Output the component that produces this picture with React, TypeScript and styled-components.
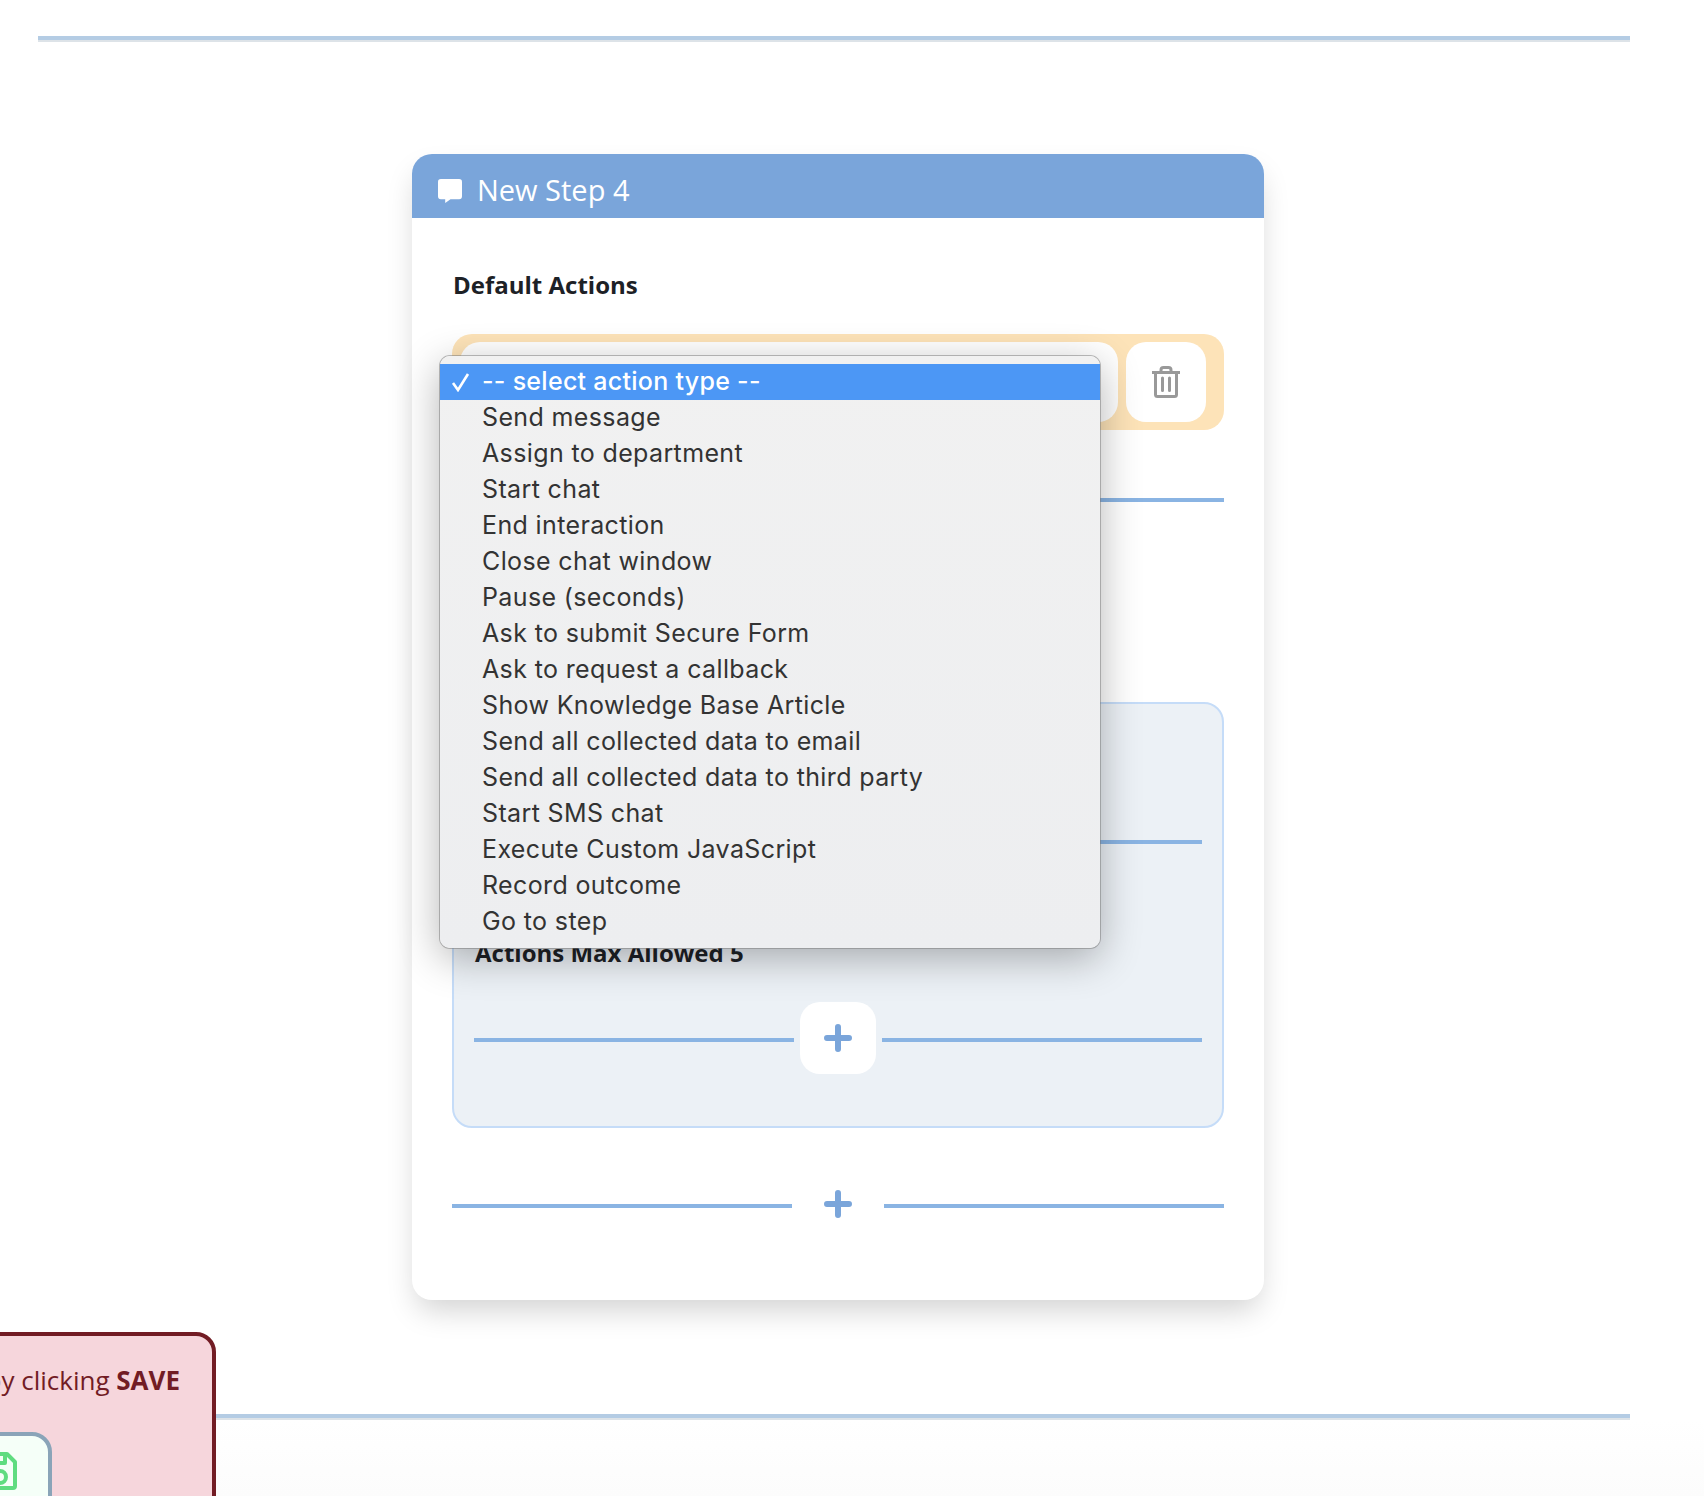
import React from 'react';
import styled, { createGlobalStyle } from 'styled-components';

const ACTION_TYPES = [
  'Send message',
  'Assign to department',
  'Start chat',
  'End interaction',
  'Close chat window',
  'Pause (seconds)',
  'Ask to submit Secure Form',
  'Ask to request a callback',
  'Show Knowledge Base Article',
  'Send all collected data to email',
  'Send all collected data to third party',
  'Start SMS chat',
  'Execute Custom JavaScript',
  'Record outcome',
  'Go to step',
];

const GlobalStyle = createGlobalStyle`
  html, body {
    margin: 0;
    padding: 0;
    background: #fff;
  }
  body {
    font-family: 'Open Sans', sans-serif;
    color: #1d2126;
    overflow: hidden;
  }
`;

const Page = styled.div`
  position: relative;
  height: 1496px;
  overflow: hidden;
  padding-top: 36px;
  box-sizing: border-box;
  background: linear-gradient(#fff 1420px, #fcfcfc 1496px);
`;

const PageRule = styled.div`
  height: 4px;
  margin: 0 74px 0 38px;
  background: #b4cce4;
  box-shadow: 0 2px 0 #dde3e8;
`;

const Card = styled.section`
  position: relative;
  width: 852px;
  margin: 114px 0 114px 412px;
  background: #fff;
  border-radius: 20px;
  box-shadow: 0 15px 30px -5px rgba(0, 0, 0, 0.18);
`;

const CardHeader = styled.header`
  display: flex;
  align-items: center;
  gap: 15px;
  height: 58px;
  padding: 6px 0 0 26px;
  background: #7aa5da;
  border-radius: 20px 20px 0 0;
  color: #fff;
  font-size: 29px;
  font-weight: 500;
`;

const BubbleIcon = styled.svg`
  margin-top: 3px;
`;

const CardBody = styled.div`
  padding: 51px 40px 82px;
`;

const SectionLabel = styled.h3<{ $top?: number; $bottom?: number }>`
  margin: ${(p) => p.$top ?? 0}px 0 ${(p) => p.$bottom ?? 0}px;
  padding-left: 1px;
  font-size: 24px;
  line-height: 32px;
  font-weight: 700;
  color: #1d2126;
`;

const ActionRow = styled.div`
  display: flex;
  gap: 8px;
  margin-top: 33px;
  padding: 8px 18px 8px 8px;
  background: #fde3b8;
  border-radius: 20px;
`;

const ActionSelect = styled.div`
  flex: 1;
  height: 80px;
  background: #fff;
  border-radius: 20px;
`;

const IconButton = styled.button<{ $width: number; $height: number }>`
  display: flex;
  align-items: center;
  justify-content: center;
  flex: none;
  width: ${(p) => p.$width}px;
  height: ${(p) => p.$height}px;
  padding: 0;
  border: 0;
  background: #fff;
  border-radius: 20px;
`;

const Rule = styled.div<{ $top?: number }>`
  flex: 1;
  height: 4px;
  margin-top: ${(p) => p.$top ?? 0}px;
  background: #8ab4e3;
`;

const AddRow = styled.div<{ $top: number; $gap: number }>`
  display: flex;
  align-items: center;
  gap: ${(p) => p.$gap}px;
  margin-top: ${(p) => p.$top}px;
`;

const SubPanel = styled.div`
  margin-top: 200px;
  padding: 136px 20px 52px;
  background: #ecf1f6;
  border: 2px solid #c5dcf8;
  border-radius: 20px;
`;

const BareAdd = styled.div`
  display: flex;
  flex: none;
  width: 28px;
  height: 28px;
  padding: 0 16px;
`;

const Dropdown = styled.ul`
  position: absolute;
  left: 28px;
  top: 202px;
  z-index: 2;
  width: 660px;
  margin: 0;
  padding: 8px 0;
  box-sizing: border-box;
  list-style: none;
  background: linear-gradient(#f1f1f1, #edeef0);
  border-radius: 10px;
  box-shadow: 0 0 0 1px rgba(120, 120, 120, 0.5), 0 10px 40px rgba(0, 0, 0, 0.3);
  font-family: Inter, sans-serif;
  font-size: 25px;
  letter-spacing: 0.37px;
  color: #333;
`;

const Option = styled.li<{ $selected?: boolean }>`
  display: flex;
  align-items: center;
  height: 36px;
  padding: 0 0 2px 42px;
  box-sizing: border-box;
  position: relative;
  white-space: nowrap;
  background: ${(p) => (p.$selected ? '#4c97f5' : 'transparent')};
  color: ${(p) => (p.$selected ? '#fff' : '#333')};
  font-weight: ${(p) => (p.$selected ? 500 : 400)};
  letter-spacing: ${(p) => (p.$selected ? '0.28px' : 'inherit')};
`;

const Check = styled.svg`
  position: absolute;
  left: 11px;
  top: 8px;
`;

const Notice = styled.aside`
  position: absolute;
  left: -300px;
  top: 1332px;
  display: flex;
  flex-direction: column;
  width: 516px;
  height: 220px;
  padding: 26px 32px 0 0;
  box-sizing: border-box;
  background: #f6d6dc;
  border: 4px solid #721c24;
  border-radius: 20px;
  color: #721c24;
  font-size: 26px;
  line-height: 36px;
  text-align: right;
`;

const SaveButton = styled.button`
  display: flex;
  align-items: flex-start;
  justify-content: flex-end;
  width: 348px;
  height: 110px;
  margin-top: 34px;
  padding: 16px 31px 0 0;
  box-sizing: border-box;
  background: #f5fff8;
  border: 4px solid #8aa4b8;
  border-radius: 20px;
`;

const PlusIcon = () => (
  <svg width="28" height="28" viewBox="0 0 28 28" fill="none" stroke="#7aa5da" strokeWidth="6" strokeLinecap="round">
    <path d="M14 3v22M3 14h22" />
  </svg>
);

const App = () => (
  <Page>
    <GlobalStyle />
    <PageRule />
    <Card>
      <CardHeader>
        <BubbleIcon width="24" height="24" viewBox="0 0 25 25" fill="#fff">
          <path d="M3 0h19a3 3 0 0 1 3 3v15a3 3 0 0 1-3 3h-9l-5.5 4v-4H3a3 3 0 0 1-3-3V3a3 3 0 0 1 3-3z" />
        </BubbleIcon>
        New Step 4
      </CardHeader>
      <CardBody>
        <SectionLabel>Default Actions</SectionLabel>
        <ActionRow>
          <ActionSelect />
          <IconButton $width={80} $height={80} aria-label="Delete">
            <svg width="28" height="32" viewBox="0 0 28 32" fill="none" stroke="#999" strokeWidth="3" strokeLinejoin="round">
              <path d="M0 6.5h28" />
              <path d="M9 6V4a2.5 2.5 0 0 1 2.5-2.5h5A2.5 2.5 0 0 1 19 4v2" />
              <path d="M3.5 6.5v22a2 2 0 0 0 2 2h17a2 2 0 0 0 2-2v-22" />
              <path d="M10.5 12v12.5M17.5 12v12.5" strokeLinecap="round" />
            </svg>
          </IconButton>
        </ActionRow>
        <Rule $top={68} />
        <SubPanel>
          <Rule />
          <SectionLabel $top={93} $bottom={33}>
            Actions Max Allowed 5
          </SectionLabel>
          <AddRow $top={0} $gap={6}>
            <Rule $top={4} />
            <IconButton $width={76} $height={72} aria-label="Add action">
              <PlusIcon />
            </IconButton>
            <Rule $top={4} />
          </AddRow>
        </SubPanel>
        <AddRow $top={62} $gap={16}>
          <Rule $top={4} />
          <BareAdd>
            <PlusIcon />
          </BareAdd>
          <Rule $top={4} />
        </AddRow>
      </CardBody>
      <Dropdown>
        <Option $selected>
          <Check width="20" height="20" viewBox="0 0 20 20" fill="none" stroke="#fff" strokeWidth="2.6">
            <path d="M2 11l5 7L17 2" />
          </Check>
          -- select action type --
        </Option>
        {ACTION_TYPES.map((label) => (
          <Option key={label}>{label}</Option>
        ))}
      </Dropdown>
    </Card>
    <PageRule />
    <Notice>
      <span>
        by clicking <b>SAVE</b>
      </span>
      <SaveButton aria-label="Save">
        <svg width="34" height="38" viewBox="0 0 34 38" fill="none" stroke="#5fdc80" strokeWidth="4" strokeLinejoin="round">
          <path d="M4 2h20l8 8v24a2 2 0 0 1-2 2H4a2 2 0 0 1-2-2V4a2 2 0 0 1 2-2z" />
          <path d="M9 2v9h13V2" />
          <circle cx="17" cy="25" r="6" />
        </svg>
      </SaveButton>
    </Notice>
  </Page>
);

export default App;
